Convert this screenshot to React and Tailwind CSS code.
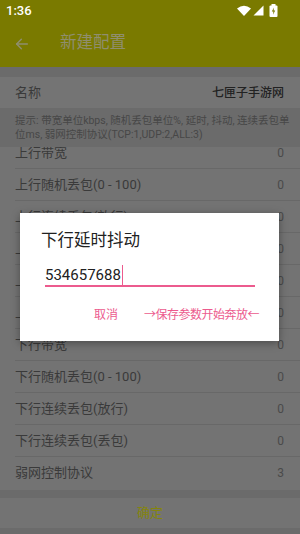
import React from "react";

const rows = [
  ["上行带宽", "0"],
  ["上行随机丢包(0 - 100)", "0"],
  ["上行连续丢包(放行)", "0"],
  ["上行连续丢包(丢包)", "0"],
  ["上行延时", "0"],
  ["上行延时抖动", "0"],
  ["下行带宽", "0"],
  ["下行随机丢包(0 - 100)", "0"],
  ["下行连续丢包(放行)", "0"],
  ["下行连续丢包(丢包)", "0"],
  ["弱网控制协议", "3"],
];

const font = { fontFamily: "Roboto, 'Noto Sans CJK SC', sans-serif" };

export default function App() {
  return (
    <div
      className="relative w-[300px] h-[534px] overflow-hidden bg-[#6b6b6b] flex flex-col"
      style={font}
    >
      {/* status bar */}
      <div className="h-[20px] bg-[#7a7a00] flex items-center justify-between pl-[6px] pr-[22px]">
        <span className="text-white text-[13px] font-medium leading-none">1:36</span>
        <div className="flex items-center gap-[2px]">
          <svg width="14" height="11" viewBox="0 0 14 11">
            <path d="M7 11 L0 3.6 Q7 -2.2 14 3.6 Z" fill="#fff" />
          </svg>
          <svg width="11" height="11" viewBox="0 0 11 11">
            <path d="M10.5 0.5 L10.5 10.5 L0.5 10.5 Z" fill="#fff" />
          </svg>
          <svg width="9" height="13" viewBox="0 0 9 13" className="ml-[3px]">
            <rect x="2.5" y="0" width="4" height="2" fill="#fff" />
            <rect x="0.5" y="1.5" width="8" height="11.5" rx="1" fill="#fff" />
            <path d="M5 3.5 L2.8 7.6 L4.4 7.6 L4 10.8 L6.2 6.6 L4.6 6.6 Z" fill="#7a7a00" />
          </svg>
        </div>
      </div>
      {/* toolbar */}
      <div className="h-[47px] bg-[#7a7a00] flex items-center">
        <svg width="16" height="16" viewBox="0 0 24 24" className="ml-[14px]" fill="none" stroke="#8f8e6e" strokeWidth="2.2" strokeLinecap="round" strokeLinejoin="round">
          <path d="M20 12H4" />
          <path d="M11 5l-7 7 7 7" />
        </svg>
        <span className="ml-[30px] text-[16.5px] text-[#8f8e6e] leading-none">新建配置</span>
      </div>
      <div className="h-[10px]" />
      {/* name row */}
      <div className="h-[31px] bg-[#747474] flex items-center justify-between pl-[15px] pr-[16px]">
        <span className="text-[13px] text-[#3a3a3a]">名称</span>
        <span className="text-[12px] font-medium text-[#222]">七匣子手游网</span>
      </div>
      {/* hint */}
      <div className="h-[39px] pt-[6px] pl-[15px] pr-[2px] text-[10.5px] leading-[14px] text-[#474747]">
        提示: 带宽单位kbps, 随机丢包单位%, 延时, 抖动, 连续丢包单位ms, 弱网控制协议(TCP:1,UDP:2,ALL:3)
      </div>
      {/* list */}
      <div className="h-[343px] bg-[#737373] overflow-hidden">
        <div className="-mt-[10px]">
          {rows.map(([label, value], i) => (
            <div
              key={i}
              className={
                "h-[32px] ml-[15px] pr-[16px] flex items-center justify-between " +
                (i < rows.length - 1 ? "border-b border-[#686868]" : "")
              }
            >
              <span className="text-[13px] text-[#3a3a3a]">{label}</span>
              <span className="text-[12px] text-[#4a4a4a]">{value}</span>
            </div>
          ))}
        </div>
      </div>
      <div className="h-[8px]" />
      {/* button */}
      <div className="h-[30px] bg-[#737373] flex items-center justify-center">
        <span className="text-[13px] text-[#85850c]">确定</span>
      </div>
      <div className="flex-1" />

      {/* dialog */}
      <div className="absolute left-[20px] top-[213px] w-[259px] h-[128px] bg-white shadow-[0_2px_8px_rgba(0,0,0,0.35)] flex flex-col">
        <div className="pt-[18px] pl-[21px] text-[16.5px] leading-[20px] text-[#212121]">下行延时抖动</div>
        <div className="mt-[14px] ml-[25px] mr-[24px] h-[22px] border-b-2 border-[#ec5b8e] flex items-center">
          <span className="text-[15px] leading-none text-[#212121]">534657688</span>
          <span className="ml-[1px] w-[1.5px] h-[20px] bg-[#ec5b8e]" />
        </div>
        <div className="mt-[22px] flex items-center justify-end pr-[20px] gap-[26px] text-[12px] text-[#ec5b8e] leading-none">
          <span>取消</span>
          <span className="tracking-[-0.5px]">→保存参数开始奔放←</span>
        </div>
      </div>
    </div>
  );
}
